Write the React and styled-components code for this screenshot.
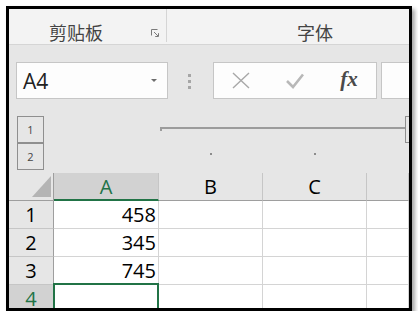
import React from "react";
import styled, { createGlobalStyle, css } from "styled-components";

const GlobalStyle = createGlobalStyle`
  body {
    margin: 0;
    background: #fff;
    font-family: "Open Sans", "Noto Sans CJK SC", sans-serif;
  }
`;

const GREEN = "#217346";

// same column template for the outline strip and the sheet itself
const sheetColumns = css`
  display: grid;
  grid-template-columns: 45px 105px 104px 104px minmax(0, 1fr);
`;

const Frame = styled.div`
  box-sizing: border-box;
  width: 406px;
  height: 305px;
  margin: 6px 0 0 6px;
  border: 3px solid #000;
  box-shadow: 3px 3px 4px rgba(0, 0, 0, 0.35);
  overflow: hidden;
  background: #e6e6e6;
  display: flex;
  flex-direction: column;
`;

const Ribbon = styled.div`
  display: flex;
  flex-shrink: 0;
  height: 36px;
  box-sizing: border-box;
  background: #f3f3f3;
  border-bottom: 1px solid #d5d5d5;
`;

const RibbonGroup = styled.div`
  display: flex;
  align-items: center;
  flex-shrink: 0;
  box-sizing: border-box;
  width: ${(p) => p.$width}px;
  height: 35px;
  padding: 10px 0 0 ${(p) => p.$indent}px;
`;

const GroupLabel = styled.span`
  font-family: "Noto Sans CJK SC", sans-serif;
  font-size: 18px;
  line-height: 1;
  color: #444;
`;

const GroupDivider = styled.div`
  flex-shrink: 0;
  width: 1px;
  height: 33px;
  background: #d5d5d5;
`;

const Launcher = styled.svg`
  margin: 3px 7px 0 auto;
`;

const FormulaRow = styled.div`
  display: flex;
  align-items: center;
  flex-shrink: 0;
  height: 37px;
  padding: 17px 0 0 7px;
`;

const Box = styled.div`
  flex-shrink: 0;
  box-sizing: border-box;
  height: 37px;
  border: 1px solid #c6c6c6;
  background: #fdfdfd;
`;

const NameBox = styled(Box)`
  width: 152px;
  display: flex;
  align-items: center;
  padding: 0 10px 0 6px;
`;

const NameText = styled.span`
  flex: 1;
  font-size: 21px;
  color: #222;
`;

const Caret = styled.span`
  width: 0;
  height: 0;
  border-left: 3px solid transparent;
  border-right: 3px solid transparent;
  border-top: 3px solid #6d6d6d;
`;

const Grip = styled.div`
  display: flex;
  flex-direction: column;
  gap: 3px;
  margin-left: 20px;
  margin-top: 1px;
`;

const GripDot = styled.span`
  width: 3px;
  height: 3px;
  background: #a6a6a6;
`;

const FormulaButtons = styled(Box)`
  width: 164px;
  margin-left: 22px;
  display: flex;
`;

const FormulaSlot = styled.div`
  flex: 1;
  display: flex;
  align-items: center;
  justify-content: center;
`;

const Fx = styled.span`
  font-family: "Liberation Serif", serif;
  font-style: italic;
  font-weight: bold;
  font-size: 21px;
  color: #4a4a4a;
  margin-top: -2px;
`;

const FormulaInput = styled(Box)`
  width: 80px;
  margin-left: 4px;
`;

const OutlineArea = styled.div`
  ${sheetColumns};
  grid-template-rows: 27px 27px;
  margin-top: 17px;
  padding-bottom: 3px;
  flex-shrink: 0;
`;

const LevelButton = styled.div`
  grid-column: 1;
  grid-row: ${(p) => p.$row};
  margin-left: 8px;
  width: 27px;
  height: 27px;
  box-sizing: border-box;
  border: 1px solid #8f8f8f;
  display: flex;
  align-items: center;
  justify-content: center;
  font-size: 11px;
  color: #444;
`;

const Bracket = styled.div`
  grid-column: 3 / 6;
  grid-row: 1;
  display: flex;
  align-items: flex-start;
  margin: 0 -23px 0 1px;
`;

const BracketLine = styled.div`
  flex: 1;
  margin-top: 11px;
  height: 2px;
  border-top: 2px solid #9c9c9c;
  border-left: 2px solid #9c9c9c;
`;

const CollapseBox = styled.div`
  flex-shrink: 0;
  width: 27px;
  height: 27px;
  box-sizing: border-box;
  border: 1px solid #8f8f8f;
`;

const OutlineDot = styled.span`
  grid-row: 2;
  grid-column: ${(p) => p.$col};
  justify-self: center;
  align-self: start;
  margin-top: 10px;
  width: 2px;
  height: 2px;
  background: #8c8c8c;
`;

const Sheet = styled.div`
  ${sheetColumns};
  grid-auto-rows: 28px;
  background: #fff;
`;

const Corner = styled.div`
  box-sizing: border-box;
  background: #e6e6e6;
  border-right: 1px solid #9e9e9e;
  border-bottom: 1px solid #9e9e9e;
  display: flex;
  align-items: flex-end;
  justify-content: flex-end;
  padding: 0 2px 3px 0;
`;

const CornerTriangle = styled.span`
  width: 19px;
  height: 21px;
  background: #b4b4b4;
  clip-path: polygon(100% 0, 100% 100%, 0 100%);
`;

const HeaderText = css`
  box-sizing: border-box;
  display: flex;
  align-items: center;
  justify-content: center;
  font-size: 20px;
  background: ${(p) => (p.$selected ? "#d2d2d2" : "#e6e6e6")};
  color: ${(p) => (p.$selected ? GREEN : "#000")};
`;

const ColHeader = styled.div`
  ${HeaderText};
  border-right: 1px solid #c6c6c6;
  border-bottom: ${(p) => (p.$selected ? `2px solid ${GREEN}` : "1px solid #9e9e9e")};
`;

const RowHeader = styled.div`
  ${HeaderText};
  border-right: 1px solid #9e9e9e;
  border-bottom: 1px solid #c6c6c6;
`;

const Cell = styled.div`
  position: relative;
  box-sizing: border-box;
  display: flex;
  align-items: center;
  justify-content: flex-end;
  padding-right: 2px;
  font-size: 20px;
  color: #000;
  border-right: 1px solid #d4d4d4;
  border-bottom: 1px solid #d4d4d4;

  ${(p) =>
    p.$active &&
    css`
      &::after {
        content: "";
        position: absolute;
        left: -1px;
        top: -2px;
        right: -1px;
        bottom: -2px;
        border: 2px solid ${GREEN};
      }
    `}
`;

const columns = ["A", "B", "C", ""];
const rows = [
  { n: 1, a: "458" },
  { n: 2, a: "345" },
  { n: 3, a: "745" },
  { n: 4, a: "", active: true },
];

function App() {
  return (
    <>
      <GlobalStyle />
      <Frame>
        <Ribbon>
          <RibbonGroup $width={157} $indent={40}>
            <GroupLabel>剪贴板</GroupLabel>
            <Launcher width="8" height="8" viewBox="0 0 8 8">
              <path d="M0.5 6.5V0.5H6.5" fill="none" stroke="#7a7a7a" />
              <path d="M3 3L7 7M7.5 4.2V7.5H4.2" fill="none" stroke="#7a7a7a" />
            </Launcher>
          </RibbonGroup>
          <GroupDivider />
          <RibbonGroup $width={240} $indent={130}>
            <GroupLabel>字体</GroupLabel>
          </RibbonGroup>
        </Ribbon>

        <FormulaRow>
          <NameBox>
            <NameText>A4</NameText>
            <Caret />
          </NameBox>
          <Grip>
            <GripDot />
            <GripDot />
            <GripDot />
          </Grip>
          <FormulaButtons>
            <FormulaSlot>
              <svg width="18" height="17" viewBox="0 0 18 17">
                <path d="M1 1L17 16M17 1L1 16" stroke="#a8a8a8" strokeWidth="1.4" />
              </svg>
            </FormulaSlot>
            <FormulaSlot>
              <svg width="18" height="16" viewBox="0 0 18 16">
                <path d="M1 8L7 14L17 1.5" fill="none" stroke="#b8b8b8" strokeWidth="2.6" />
              </svg>
            </FormulaSlot>
            <FormulaSlot>
              <Fx>fx</Fx>
            </FormulaSlot>
          </FormulaButtons>
          <FormulaInput />
        </FormulaRow>

        <OutlineArea>
          <LevelButton $row={1}>1</LevelButton>
          <LevelButton $row={2}>2</LevelButton>
          <Bracket>
            <BracketLine />
            <CollapseBox />
          </Bracket>
          <OutlineDot $col={3} />
          <OutlineDot $col={4} />
        </OutlineArea>

        <Sheet>
          <Corner>
            <CornerTriangle />
          </Corner>
          {columns.map((c, i) => (
            <ColHeader key={i} $selected={c === "A"}>
              {c}
            </ColHeader>
          ))}
          {rows.map((r) => (
            <React.Fragment key={r.n}>
              <RowHeader $selected={r.active}>{r.n}</RowHeader>
              <Cell $active={r.active}>{r.a}</Cell>
              <Cell />
              <Cell />
              <Cell />
            </React.Fragment>
          ))}
        </Sheet>
      </Frame>
    </>
  );
}

export default App;
